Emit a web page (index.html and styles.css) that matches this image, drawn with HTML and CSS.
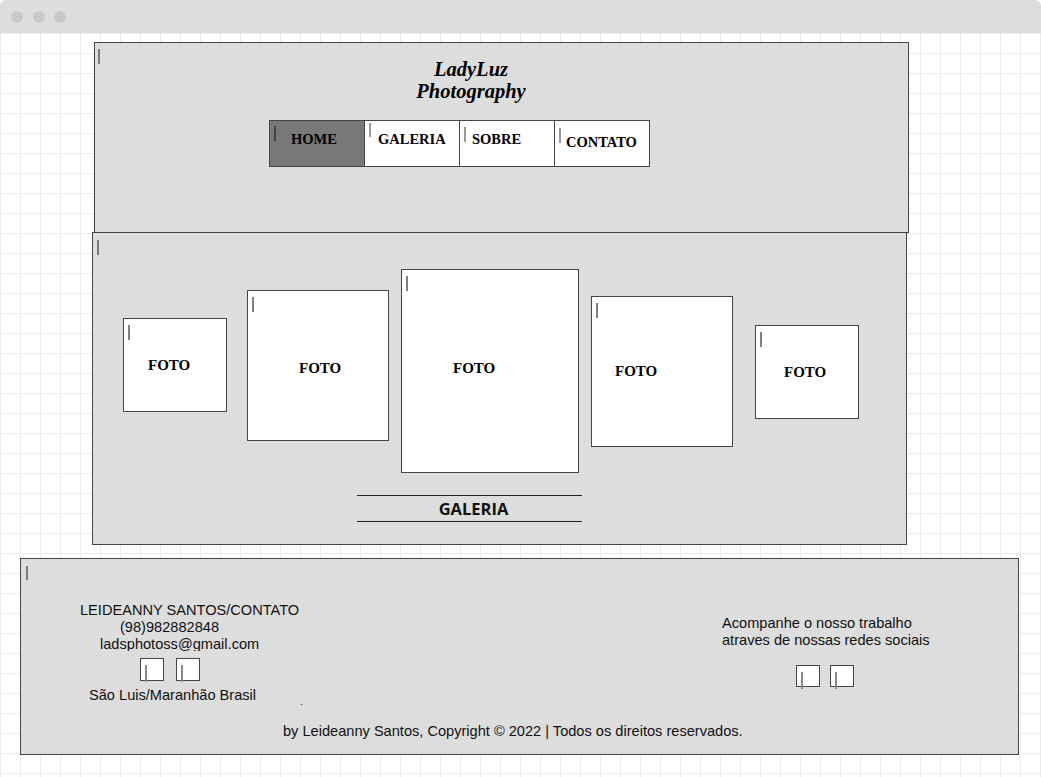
FILE: index.html
```html
<!DOCTYPE html>
<html lang="pt-BR">
<head>
<meta charset="utf-8">
<title>LadyLuz Photography</title>
<link rel="stylesheet" href="styles.css">
</head>
<body>
<div class="window">
  <div class="titlebar">
    <span class="dot"></span><span class="dot"></span><span class="dot"></span>
  </div>
  <div class="canvas">
    <header class="box hdr">
      <span class="caret caret-hdr"></span>
      <h1 class="brand">LadyLuz<br>Photography</h1>
      <nav class="nav">
        <a class="nav-item nav-home"><span class="caret"></span>HOME</a>
        <a class="nav-item nav-galeria"><span class="caret"></span>GALERIA</a>
        <a class="nav-item nav-sobre"><span class="caret"></span>SOBRE</a>
        <a class="nav-item nav-contato"><span class="caret"></span>CONTATO</a>
      </nav>
    </header>

    <section class="box gallery">
      <span class="caret caret-gal"></span>
      <div class="photos">
        <div class="photo ph1"><span class="caret"></span>FOTO</div>
        <div class="photo ph2"><span class="caret"></span>FOTO</div>
        <div class="photo ph3"><span class="caret"></span>FOTO</div>
        <div class="photo ph4"><span class="caret"></span>FOTO</div>
        <div class="photo ph5"><span class="caret"></span>FOTO</div>
      </div>
      <div class="gal-label">GALERIA</div>
    </section>

    <footer class="box footer">
      <span class="caret caret-foot"></span>
      <div class="footer-top">
        <div class="contact">
          <div class="contact-lines">
            <p class="l1">LEIDEANNY SANTOS/CONTATO</p>
            <p class="l2">(98)982882848</p>
            <p class="l3">ladsphotoss@gmail.com</p>
          </div>
          <div class="socials socials-left">
            <span class="sbox"><span class="scaret"></span></span>
            <span class="sbox"><span class="scaret"></span></span>
          </div>
          <p class="city">São Luis/Maranhão Brasil<span class="dot-mark">.</span></p>
        </div>
        <div class="follow">
          <p class="follow-text">Acompanhe o nosso trabalho<br>atraves de nossas redes sociais</p>
          <div class="socials socials-right">
            <span class="sbox sbox-r"><span class="scaret"></span></span>
            <span class="sbox sbox-r"><span class="scaret"></span></span>
          </div>
        </div>
      </div>
      <p class="copyright">by Leideanny Santos, Copyright © 2022 | Todos os direitos reservados.</p>
    </footer>
  </div>
</div>
</body>
</html>
```

FILE: styles.css
```css
* { box-sizing: border-box; }

html, body {
  margin: 0;
  padding: 0;
  background: #ffffff;
}

body {
  width: 1041px;
  height: 777px;
  overflow: hidden;
  font-family: "Liberation Sans", Arial, sans-serif;
  color: #111;
}

p { margin: 0; }

.window {
  width: 1041px;
  height: 777px;
  display: flex;
  flex-direction: column;
}

.titlebar {
  height: 33px;
  flex: 0 0 33px;
  background: #dddddd;
  border-radius: 6px 6px 0 0;
  display: flex;
  align-items: center;
  padding-left: 11px;
  gap: 9.5px;
}

.dot {
  width: 12px;
  height: 12px;
  border-radius: 50%;
  background: #c9c9c9;
}

.canvas {
  flex: 1;
  padding-top: 9px;
  background-color: #ffffff;
  background-image:
    linear-gradient(#ebebeb 1px, transparent 1px),
    linear-gradient(90deg, #ebebeb 1px, transparent 1px);
  background-size: 20px 20px;
  background-position: 0 0;
}

.box {
  position: relative;
  background: #dddddd;
  border: 1px solid #444444;
}

.caret {
  position: absolute;
  left: 4px;
  top: 6px;
  width: 2px;
  height: 15px;
  background: #7a7a7a;
}

/* ---------- header ---------- */
.hdr {
  margin-left: 94px;
  width: 815px;
  height: 191px;
  padding-top: 15px;
}

.caret-hdr { left: 3px; top: 6px; height: 15px; }

.brand {
  margin: 0 0 0 276px;
  width: 200px;
  text-align: center;
  font-family: "Liberation Serif", "Times New Roman", serif;
  font-style: italic;
  font-weight: bold;
  font-size: 20.5px;
  line-height: 22px;
  color: #000;
}

.nav {
  display: flex;
  margin: 18px 0 0 174px;
}

.nav-item {
  position: relative;
  display: block;
  width: 96px;
  height: 47px;
  border: 1px solid #444444;
  background: #ffffff;
  font-family: "Liberation Serif", "Times New Roman", serif;
  font-weight: bold;
  font-size: 14.5px;
  line-height: 17px;
  color: #000;
  text-decoration: none;
  padding-top: 10px;
}

.nav-item + .nav-item { margin-left: -1px; }

.nav-home { background: #787878; padding-left: 21px; }
.nav-home .caret { top: 5px; background: #444; }

.nav-galeria { padding-left: 13px; }
.nav-galeria .caret { top: 2px; height: 14px; background: #999; }

.nav-sobre { padding-left: 12px; }
.nav-sobre .caret { top: 6px; background: #999; }

.nav-contato { padding-left: 11px; padding-top: 13px; }
.nav-contato .caret { top: 7px; background: #999; }

/* ---------- gallery ---------- */
.gallery {
  margin-left: 92px;
  margin-top: -1px;
  width: 815px;
  height: 313px;
}

.caret-gal { left: 4px; top: 7px; }

.photos {
  display: flex;
  align-items: flex-start;
  padding-left: 30px;
}

.photo {
  position: relative;
  flex: 0 0 auto;
  background: #ffffff;
  border: 1px solid #444444;
  font-family: "Liberation Serif", "Times New Roman", serif;
  font-weight: bold;
  font-size: 15px;
  line-height: 17px;
  color: #000;
}

.photo .caret { left: 4px; top: 6px; background: #808080; }

.ph1 { width: 104px; height: 94px;  margin-top: 85px; padding: 38px 0 0 24px; }
.ph2 { width: 142px; height: 151px; margin-top: 57px; margin-left: 20px; padding: 69px 0 0 51px; }
.ph3 { width: 178px; height: 204px; margin-top: 36px; margin-left: 12px; padding: 90px 0 0 51px; }
.ph4 { width: 142px; height: 151px; margin-top: 63px; margin-left: 12px; padding: 66px 0 0 23px; }
.ph5 { width: 104px; height: 94px;  margin-top: 92px; margin-left: 22px; padding: 38px 0 0 28px; }

.gal-label {
  margin: 22px 0 0 264px;
  width: 225px;
  height: 27px;
  border-top: 1px solid #222;
  border-bottom: 1px solid #222;
  padding-left: 8px;
  text-align: center;
  font-family: "Open Sans", "Liberation Sans", sans-serif;
  font-weight: bold;
  font-size: 16.5px;
  line-height: 25px;
  color: #111;
}

/* ---------- footer ---------- */
.footer {
  margin-left: 20px;
  margin-top: 13px;
  width: 999px;
  height: 197px;
  font-size: 14.6px;
  line-height: 17px;
}

.caret-foot { left: 5px; top: 7px; height: 14px; }

.footer-top {
  display: flex;
  align-items: flex-start;
  padding-left: 59px;
}

.contact {
  width: 642px;
  padding-top: 43px;
}

.contact-lines {
  height: 49px;
  overflow: hidden;
}

.l2 { margin-left: 40px; }
.l3 { margin-left: 20px; }

.socials {
  display: flex;
}

.socials-left {
  margin: 7px 0 0 60px;
  gap: 12px;
}

.sbox {
  position: relative;
  display: block;
  width: 24px;
  height: 23px;
  background: #ffffff;
  border: 1px solid #444444;
}

.sbox-r { height: 22px; }

.scaret {
  position: absolute;
  left: 4px;
  top: 6px;
  width: 2px;
  height: 17px;
  background: #888888;
}

.city {
  margin: 6px 0 0 9px;
}

.dot-mark {
  display: inline-block;
  margin-left: 44px;
  line-height: 0;
  vertical-align: -5px;
  font-size: 10px;
}

.follow {
  padding-top: 56px;
}

.follow-text {
  line-height: 16.5px;
}

.socials-right {
  margin: 17px 0 0 74px;
  gap: 10px;
}

.copyright {
  margin-top: 19px;
  padding-left: 262px;
}
```
